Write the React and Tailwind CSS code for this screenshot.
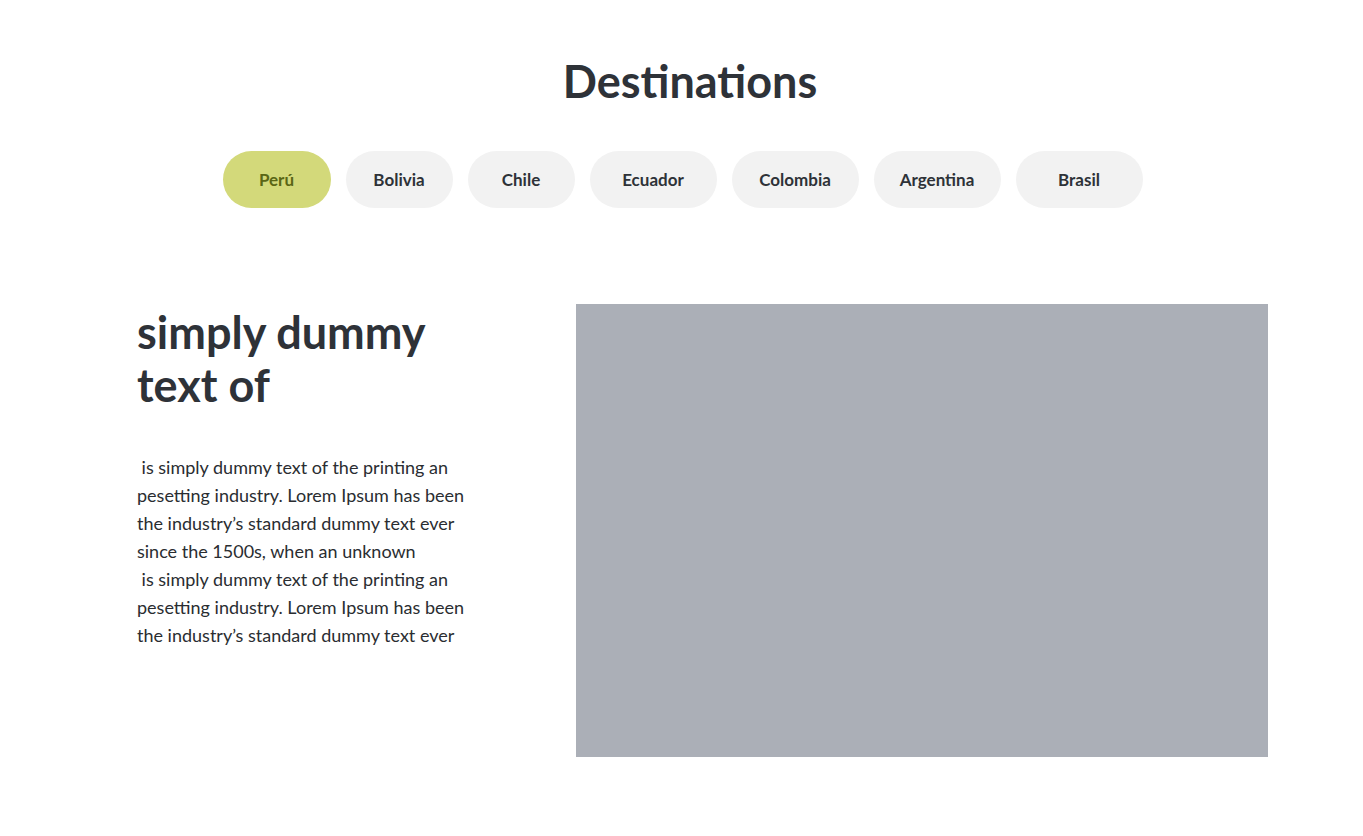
import { useState } from 'react';

const countries = [
    { name: 'Perú', w: 'w-[108px]' },
    { name: 'Bolivia', w: 'w-[107px]' },
    { name: 'Chile', w: 'w-[107px]' },
    { name: 'Ecuador', w: 'w-[127px]' },
    { name: 'Colombia', w: 'w-[127px]' },
    { name: 'Argentina', w: 'w-[127px]' },
    { name: 'Brasil', w: 'w-[127px]' },
];

const lines = [
    ' is simply dummy text of the printing an',
    'pesetting industry. Lorem Ipsum has been',
    'the industry’s standard dummy text ever',
    'since the 1500s, when an unknown',
    ' is simply dummy text of the printing an',
    'pesetting industry. Lorem Ipsum has been',
    'the industry’s standard dummy text ever',
];

function App() {
    const [selected, setSelected] = useState('Perú');

    return (
        <div className="min-h-screen bg-white text-[#2e3238] font-['Lato','Liberation_Sans',sans-serif]">
            {/* Titulo */}
            <h1 className="pt-[54px] pl-[17px] text-center text-[45px] leading-[54px] font-bold">Destinations</h1>

            {/* Tabs de paises */}
            <nav className="mt-[43px] flex justify-center gap-[15px] pl-[2px]">
                {countries.map((c) => (
                    <button
                        key={c.name}
                        className={`${c.w} h-[57px] rounded-full text-[17px] font-bold ${selected === c.name ? 'bg-[#d3d97a] text-[#5a6615]' : 'bg-[#f2f2f2] text-[#2e3238]'}`}
                        onClick={() => setSelected(c.name)}
                    >
                        {c.name}
                    </button>
                ))}
            </nav>

            {/* Contenido */}
            <div className="mt-[96px] flex pl-[137px]">
                <div className="w-[439px] shrink-0">
                    <h2 className="mt-[2px] text-[45px] leading-[53px] font-bold">
                        simply dummy
                        <br />
                        text of
                    </h2>
                    <p className="mt-[41px] text-[18px] leading-[28px] text-[#2a2d31]">
                        {lines.map((l, i) => (
                            <span key={i} className="block whitespace-pre">{l}</span>
                        ))}
                    </p>
                </div>
                <div className="w-[692px] h-[453px] bg-[#abafb7]"></div>
            </div>
        </div>
    );
}

export default App;
